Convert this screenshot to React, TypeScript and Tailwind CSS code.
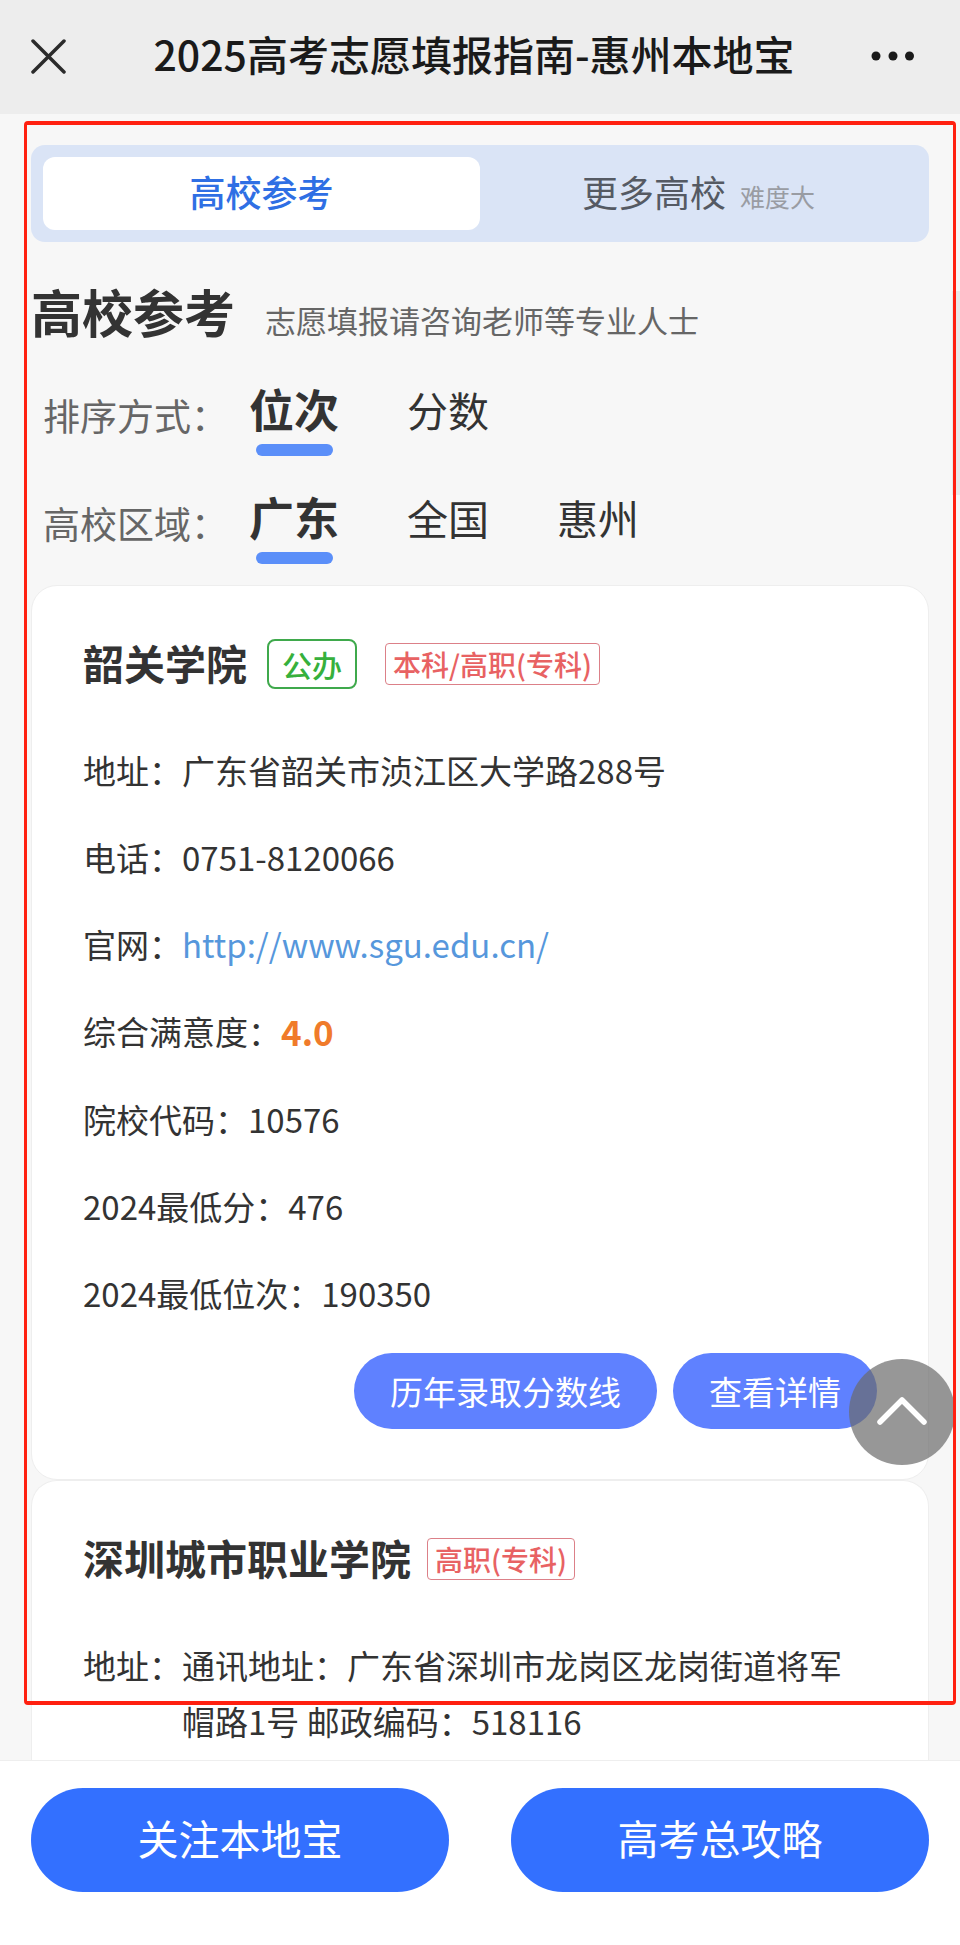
import { useState } from "react";
import clsx from "clsx";

type School = {
    name: string;
    isPublic?: boolean;
    level: string;
    address: string;
    phone?: string;
    site?: string;
    rating?: string;
    code?: string;
    minScore?: string;
    minRank?: string;
};

const SCHOOLS: School[] = [
    {
        name: "韶关学院",
        isPublic: true,
        level: "本科/高职(专科)",
        address: "广东省韶关市浈江区大学路288号",
        phone: "0751-8120066",
        site: "http://www.sgu.edu.cn/",
        rating: "4.0",
        code: "10576",
        minScore: "476",
        minRank: "190350",
    },
    {
        name: "深圳城市职业学院",
        level: "高职(专科)",
        address: "通讯地址：广东省深圳市龙岗区龙岗街道将军帽路1号 邮政编码：518116",
    },
];

const SORTS = ["位次", "分数"];
const AREAS = ["广东", "全国", "惠州"];

function FilterRow({
    label,
    options,
    value,
    onChange,
}: {
    label: string;
    options: string[];
    value: string;
    onChange: (v: string) => void;
}) {
    return (
        <div className="flex h-[108px] items-start pl-3">
            <span className="w-[206px] pt-[22px] text-[37px] leading-[48px] text-[#666666]">
                {label}：
            </span>
            <div className="flex gap-17">
                {options.map((o) => (
                    <button
                        key={o}
                        onClick={() => onChange(o)}
                        className="flex flex-col items-center pt-4"
                    >
                        <span
                            className={clsx(
                                "leading-[48px] text-[#333333]",
                                o === value ? "text-[45px] font-bold" : "text-[41px]",
                            )}
                        >
                            {o}
                        </span>
                        {o === value && (
                            <span className="mt-[11px] h-3 w-[77px] rounded-full bg-[#5b8ff9]" />
                        )}
                    </button>
                ))}
            </div>
        </div>
    );
}

function InfoRow({ label, children }: { label: string; children: React.ReactNode }) {
    return (
        <div className="flex">
            <dt className="shrink-0">{label}：</dt>
            <dd className="flex-1">{children}</dd>
        </div>
    );
}

function SchoolCard({ school, last }: { school: School; last: boolean }) {
    return (
        <article
            className={clsx(
                "border border-[#eeeeee] bg-white px-[51px] pt-[50px]",
                last ? "flex-1 rounded-t-[26px] border-b-0" : "rounded-[26px] pb-[50px]",
            )}
        >
            <div className="flex h-14 items-center">
                <h2 className="pb-1 text-[41px] font-bold leading-[56px] text-[#333333]">
                    {school.name}
                </h2>
                {school.isPublic && (
                    <span className="ml-5 mr-3 rounded-lg border-2 border-[#3fa94c] px-[13px] text-[30px] font-medium leading-[46px] text-[#36b03c]">
                        公办
                    </span>
                )}
                <span className="ml-4 rounded-[4px] border border-[#dc8088] px-[7px] text-[28px] font-medium leading-[40px] text-[#e86263]">
                    {school.level}
                </span>
            </div>

            <dl className="mt-[50px] flex flex-col gap-[31px] pr-2 text-[33px] leading-[56px] text-[#333333]">
                <InfoRow label="地址">{school.address}</InfoRow>
                {school.phone && <InfoRow label="电话">{school.phone}</InfoRow>}
                {school.site && (
                    <InfoRow label="官网">
                        <a href={school.site} className="text-[#5697dc]">
                            {school.site}
                        </a>
                    </InfoRow>
                )}
                {school.rating && (
                    <InfoRow label="综合满意度">
                        <strong className="text-[35px] font-bold text-[#f07b2a]">
                            {school.rating}
                        </strong>
                    </InfoRow>
                )}
                {school.code && <InfoRow label="院校代码">{school.code}</InfoRow>}
                {school.minScore && <InfoRow label="2024最低分">{school.minScore}</InfoRow>}
                {school.minRank && <InfoRow label="2024最低位次">{school.minRank}</InfoRow>}
            </dl>

            {school.minRank && (
                <div className="mt-8 flex justify-end gap-4 text-[33px] leading-[76px] text-white">
                    <button className="rounded-full bg-[#5f81ff] px-9">历年录取分数线</button>
                    <button className="rounded-full bg-[#5f81ff] px-9">查看详情</button>
                </div>
            )}
        </article>
    );
}

export default function App() {
    const [tab, setTab] = useState("ref");
    const [sort, setSort] = useState("位次");
    const [area, setArea] = useState("广东");

    return (
        <div className="flex min-h-screen flex-col bg-[#f7f7f7] font-['Noto_Sans_CJK_SC',sans-serif]">
            {/* Title bar */}
            <header className="sticky top-0 z-20 flex h-[114px] items-center justify-between bg-[#ededed] px-[30px] pb-0.5">
                <button aria-label="关闭">
                    <svg width="36" height="36" viewBox="0 0 36 36" fill="none" stroke="#2b2b2b" strokeWidth="3.5" strokeLinecap="round">
                        <path d="M3 3 34 34M34 3 3 34" />
                    </svg>
                </button>
                <h1 className="ml-3 pb-1 text-[41px] font-medium text-[#1a1a1a]">
                    2025高考志愿填报指南-惠州本地宝
                </h1>
                <button aria-label="更多" className="mr-4">
                    <svg width="44" height="12" viewBox="0 0 44 12" fill="#1a1a1a">
                        <circle cx="6" cy="6" r="4.5" />
                        <circle cx="23" cy="6" r="4.5" />
                        <circle cx="39.5" cy="6" r="4.5" />
                    </svg>
                </button>
            </header>

            <main className="relative flex flex-1 flex-col px-[31px] pt-[31px]">
                {/* Tabs */}
                <div className="grid h-[97px] grid-cols-2 rounded-[14px] bg-[#dae4f6] px-3 py-3">
                    <button
                        onClick={() => setTab("ref")}
                        className={clsx(
                            "rounded-xl pb-1.5 text-[36px]",
                            tab === "ref" ? "bg-white font-medium text-[#2f6fe4]" : "text-[#555a63]",
                        )}
                    >
                        高校参考
                    </button>
                    <button
                        onClick={() => setTab("more")}
                        className={clsx(
                            "rounded-xl pb-1.5 text-[36px]",
                            tab === "more" ? "bg-white font-medium text-[#2f6fe4]" : "text-[#555a63]",
                        )}
                    >
                        更多高校
                        <span className="ml-[14px] text-[25px] text-[#999ca3]">难度大</span>
                    </button>
                </div>

                <div className="mt-[31px] flex items-baseline gap-[30px]">
                    <h2 className="text-[51px] font-bold leading-[76px] text-[#333333]">高校参考</h2>
                    <p className="text-[31px] text-[#666666]">志愿填报请咨询老师等专业人士</p>
                </div>

                {/* Filters */}
                <div className="mt-5">
                    <FilterRow label="排序方式" options={SORTS} value={sort} onChange={setSort} />
                    <FilterRow label="高校区域" options={AREAS} value={area} onChange={setArea} />
                </div>

                {SCHOOLS.map((s, i) => (
                    <SchoolCard key={s.name} school={s} last={i === SCHOOLS.length - 1} />
                ))}

                {/* Highlight frame */}
                <div className="pointer-events-none absolute bottom-[55px] left-6 right-1 top-[7px] z-40 rounded-[4px] border-x-[3px] border-y-4 border-[#ff2010]" />
            </main>

            {/* Scroll thumb */}
            <div aria-hidden="true" className="fixed right-0 top-[291px] z-10 h-[204px] w-2 bg-[#e9e9e9]" />

            {/* Back to top */}
            <button
                aria-label="回到顶部"
                onClick={() => window.scrollTo({ top: 0, behavior: "smooth" })}
                className="fixed bottom-[480px] right-[5px] z-30 flex h-[106px] w-[106px] items-center justify-center rounded-full bg-[#6b6b6b]/70"
            >
                <svg width="54" height="32" viewBox="0 0 54 32" fill="none" stroke="#ffffff" strokeWidth="5.5" strokeLinecap="round" strokeLinejoin="round">
                    <path d="M5 26 27 4 49 26" />
                </svg>
            </button>

            {/* Bottom actions */}
            <footer className="sticky bottom-0 z-20 grid grid-cols-2 gap-[62px] border-t border-[#eeeeee] bg-white px-[31px] pb-[53px] pt-[27px]">
                <button className="h-[104px] rounded-full bg-[#3370ff] pb-1 text-[41px] text-white">
                    关注本地宝
                </button>
                <button className="h-[104px] rounded-full bg-[#3370ff] pb-1 text-[41px] text-white">
                    高考总攻略
                </button>
            </footer>
        </div>
    );
}
